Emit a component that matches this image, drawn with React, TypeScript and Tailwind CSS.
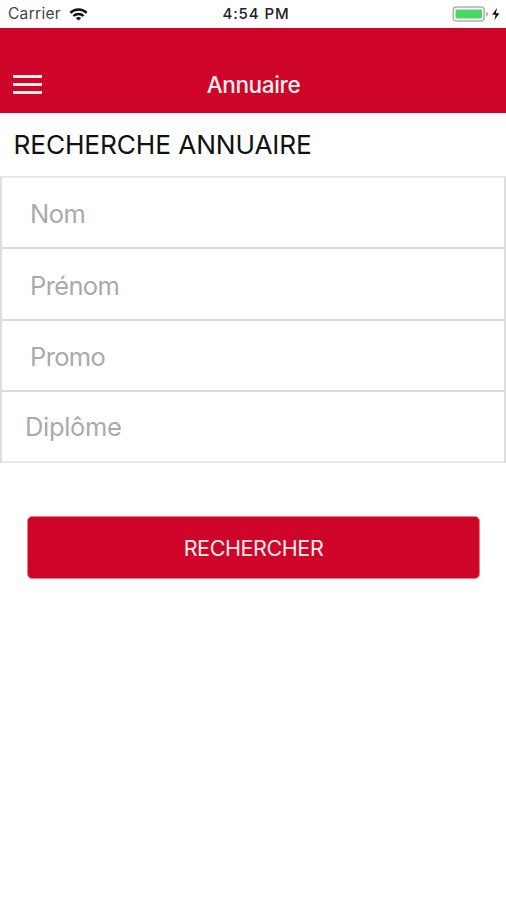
const fields = [
  { label: "Nom", box: "h-[71px] pl-[28px] pt-[4px] border-[#dcdcdc]", text: "tracking-[-0.5px]" },
  { label: "Prénom", box: "h-[72px] pl-[28px] pt-[4px] border-[#dcdcdc]", text: "tracking-[-0.65px]" },
  { label: "Promo", box: "h-[71px] pl-[28px] pt-[4px] border-[#dcdcdc]", text: "tracking-[-0.65px]" },
  { label: "Diplôme", box: "h-[71px] pl-[23px] pt-[2px] border-[#e6e6e6]", text: "tracking-[-0.35px]" },
];

function StatusBar() {
  return (
    <div className="grid h-7 grid-cols-3 items-center text-[15px] text-[#222]">
      <div className="flex items-center gap-[8px] pl-[8px]">
        <span className="text-[15.5px] tracking-[0.3px] text-[#444]">Carrier</span>
        <svg width="19" height="13" viewBox="0 0 18 13" fill="none" stroke="#111" strokeWidth="2.3">
          <path d="M0.8 4.8C5.4 0.4 12.6 0.4 17.2 4.8" />
          <path d="M3.9 8C6.8 5.3 11.2 5.3 14.1 8" />
          <path d="M6.3 9.9C7.8 8.6 10.2 8.6 11.7 9.9L9 12.6Z" fill="#111" stroke="none" />
        </svg>
      </div>
      <span className="pl-[6px] pt-px text-center font-medium tracking-[0.9px]">4:54 PM</span>
      <div className="flex items-center justify-end pr-[6px]">
        <svg width="48" height="16" viewBox="0 0 48 16">
          <rect x="1.2" y="1" width="31" height="14" rx="3.2" fill="#fff" stroke="#b0b0b0" strokeWidth="1.5" />
          <rect x="3.5" y="3.5" width="26.5" height="9" rx="1" fill="#4bd763" />
          <path d="M34 5.7C36.7 6.5 36.7 9.5 34 10.3Z" fill="#b0b0b0" />
          <path d="M45 1.8L40.2 8.8H43.6L42.3 14.2L47.4 7.2H43.9Z" fill="#111" />
        </svg>
      </div>
    </div>
  );
}

export default function App() {
  return (
    <div className="h-[900px] w-full overflow-hidden bg-white font-['Inter','Liberation_Sans',sans-serif]">
      <StatusBar />
      <header className="grid h-[85px] grid-cols-[1fr_auto_1fr] items-center bg-[#ce0529] px-[13px] pt-[28px] text-[#fff0f0]">
        <button aria-label="Menu" className="flex w-[29px] flex-col gap-[5px]">
          <span className="h-[3px] w-full bg-[#fff0f0]" />
          <span className="h-[3px] w-full bg-[#fff0f0]" />
          <span className="h-[3px] w-full bg-[#fff0f0]" />
        </button>
        <h1 className="pt-[2px] pl-px text-[22.5px] leading-none font-medium tracking-[-0.35px]">Annuaire</h1>
      </header>
      <main>
        <h2 className="flex h-[63px] items-center pl-[13.5px] text-[26.25px] tracking-[-0.12px] whitespace-nowrap text-[#111]">
          RECHERCHE ANNUAIRE
        </h2>
        <div className="border-x-2 border-t-2 border-x-[#dedede] border-t-[#e8e8e8]">
          {fields.map((f) => (
            <div
              key={f.label}
              className={`flex items-center border-b-2 text-[25.5px] text-[#aaa] ${f.box}`}
            >
              <span className={f.text}>{f.label}</span>
            </div>
          ))}
        </div>
        <div className="px-[27px] pt-[53px]">
          <button className="flex h-[63px] w-[453px] items-center justify-center rounded-[5px] border border-[#e88080] bg-[#ce0529] pt-[2px] text-[21.5px] tracking-[-0.4px] text-[#ffeaea]">
            RECHERCHER
          </button>
        </div>
      </main>
    </div>
  );
}
